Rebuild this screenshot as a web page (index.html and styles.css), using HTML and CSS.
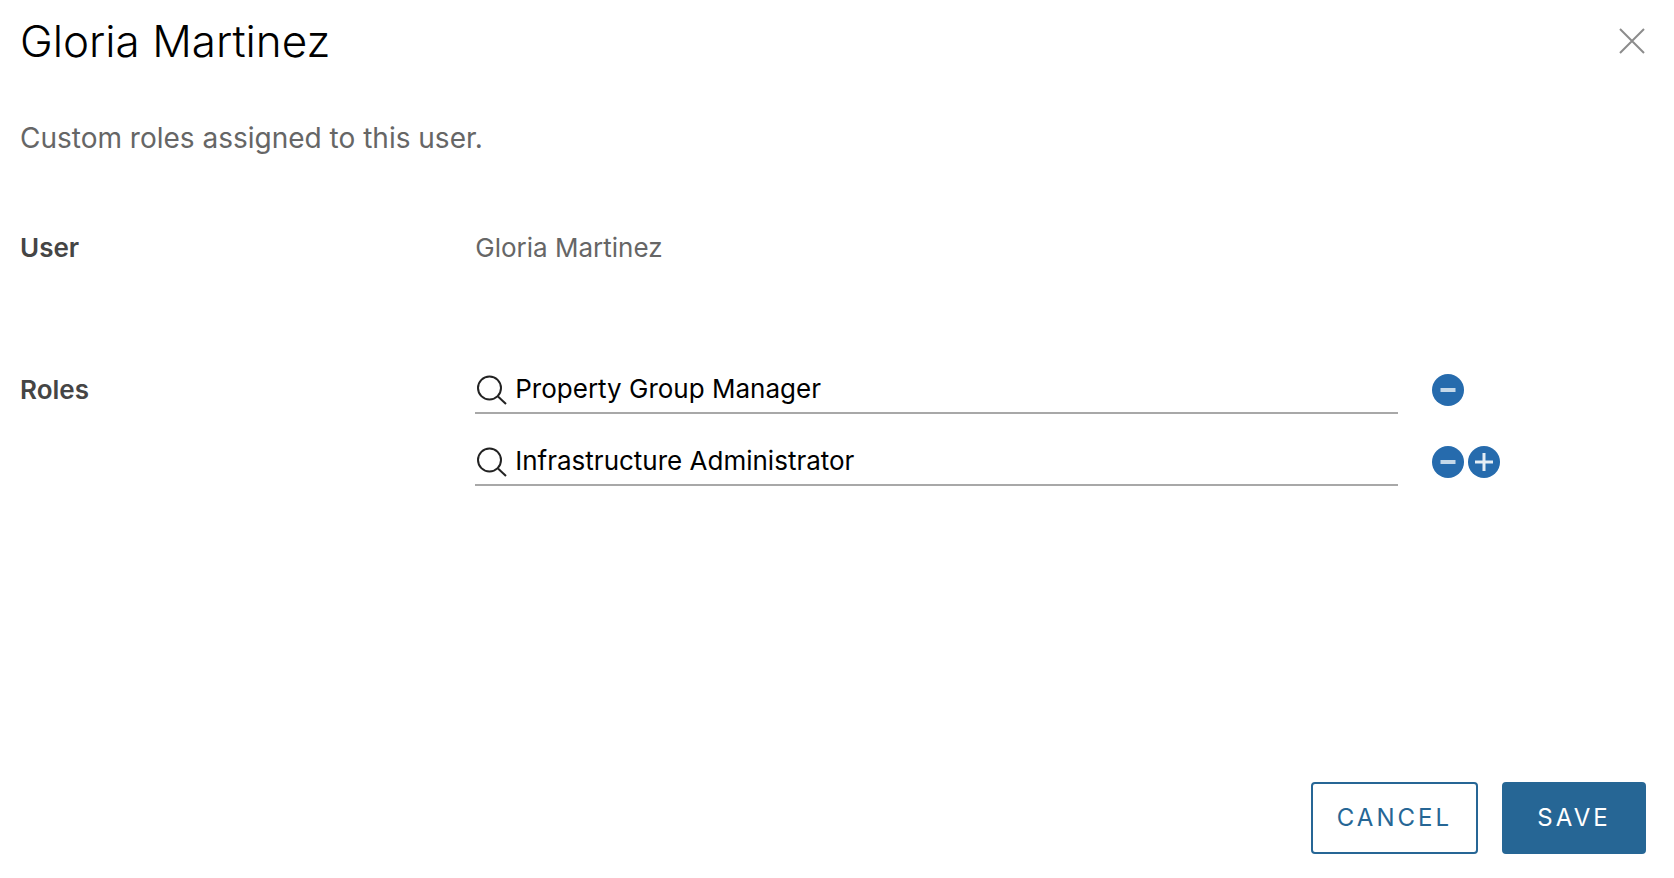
FILE: index.html
```html
<!DOCTYPE html>
<html lang="en">
<head>
<meta charset="utf-8">
<title>Gloria Martinez</title>
<link rel="stylesheet" href="styles.css">
</head>
<body>
<main class="dialog" role="dialog" aria-labelledby="dialog-title">
  <header class="dialog-header">
    <h1 class="dialog-title" id="dialog-title">Gloria Martinez</h1>
    <button class="icon-button" type="button" aria-label="Close">
      <svg class="close-icon" viewBox="0 0 28 28" aria-hidden="true"><path d="M2 2 26 26M26 2 2 26"/></svg>
    </button>
  </header>
  <p class="intro">Custom roles assigned to this user.</p>
  <form class="form" id="roles-form">
    <div class="form-row">
      <div class="label">User</div>
      <div class="value">Gloria Martinez</div>
    </div>
    <div class="form-row">
      <div class="label label-field" id="roles-label">Roles</div>
      <div class="roles" role="group" aria-labelledby="roles-label">
        <div class="role">
          <label class="search">
            <svg class="search-icon" viewBox="0 0 32 32" aria-hidden="true"><circle cx="14.5" cy="15" r="11.5"/><path d="M23 23.5 31 31"/></svg>
            <input class="search-input" type="text" aria-label="Role 1" value="Property Group Manager">
          </label>
          <div class="role-actions">
            <button class="icon-button" type="button" aria-label="Remove role">
              <svg class="round-icon" viewBox="0 0 32 32" aria-hidden="true"><circle cx="16" cy="16" r="16"/><path d="M8.5 16H23.5"/></svg>
            </button>
          </div>
        </div>
        <div class="role">
          <label class="search">
            <svg class="search-icon" viewBox="0 0 32 32" aria-hidden="true"><circle cx="14.5" cy="15" r="11.5"/><path d="M23 23.5 31 31"/></svg>
            <input class="search-input" type="text" aria-label="Role 2" value="Infrastructure Administrator">
          </label>
          <div class="role-actions">
            <button class="icon-button" type="button" aria-label="Remove role">
              <svg class="round-icon" viewBox="0 0 32 32" aria-hidden="true"><circle cx="16" cy="16" r="16"/><path d="M8.5 16H23.5"/></svg>
            </button>
            <button class="icon-button" type="button" aria-label="Add role">
              <svg class="round-icon round-icon-add" viewBox="0 0 32 32" aria-hidden="true"><circle cx="16" cy="16" r="16"/><path d="M7 16H25M16 7V25"/></svg>
            </button>
          </div>
        </div>
      </div>
    </div>
  </form>
  <footer class="dialog-footer">
    <button class="button" type="button">CANCEL</button>
    <button class="button button-primary" type="submit" form="roles-form">SAVE</button>
  </footer>
</main>
</body>
</html>
```
FILE: styles.css
```css
* {
  box-sizing: border-box;
}

body {
  margin: 0;
  background: #fff;
  color: #666;
  font-family: Inter, "Open Sans", sans-serif;
  font-size: 26px;
  line-height: 32px;
}

.dialog {
  display: flex;
  flex-direction: column;
  min-height: 100vh;
  padding: 15px 28px 24px 20px;
}

.dialog-header {
  display: flex;
  align-items: center;
  justify-content: space-between;
}

.dialog-title {
  margin: 0;
  color: #000;
  font-size: 44px;
  font-weight: 300;
  line-height: 52px;
}

.icon-button {
  display: flex;
  padding: 0;
  border: 0;
  background: none;
  cursor: pointer;
}

.close-icon {
  width: 28px;
  height: 28px;
  fill: none;
  stroke: #8c8c8c;
  stroke-width: 2;
}

.intro {
  margin: 53px 0 76px;
  font-size: 28px;
  line-height: 36px;
}

.form {
  display: flex;
  flex-direction: column;
  gap: 102px;
  flex: 1;
}

.form-row {
  display: grid;
  grid-template-columns: 28fr 72fr;
}

.label {
  color: #454545;
  font-weight: 600;
}

.label-field {
  padding-top: 8px;
}

.roles {
  display: flex;
  flex-direction: column;
  gap: 24px;
}

.role {
  display: grid;
  grid-template-columns: 69fr 16fr;
  gap: 34px;
}

.search {
  display: flex;
  align-items: center;
  gap: 8px;
  height: 48px;
  border-bottom: 2px solid #a8a8a8;
}

.search-icon {
  width: 32px;
  height: 32px;
  fill: none;
  stroke: #222;
  stroke-width: 2;
}

.search-input {
  flex: 1;
  min-width: 0;
  padding: 0;
  border: 0;
  outline: 0;
  background: none;
  color: #000;
  font: inherit;
}

.role-actions {
  display: flex;
  align-items: center;
  gap: 4px;
}

.round-icon {
  width: 32px;
  height: 32px;
  fill: #266bad;
}

.round-icon path {
  stroke: #c4d8e9;
  stroke-width: 4;
}

.round-icon-add path {
  stroke-width: 3;
  stroke: #e4edf5;
}

.dialog-footer {
  display: flex;
  justify-content: flex-end;
  gap: 24px;
}

.button {
  min-width: 144px;
  height: 72px;
  padding: 0 24px;
  border: 2px solid #266695;
  border-radius: 4px;
  background: #fff;
  color: #266695;
  font: inherit;
  font-size: 24px;
  letter-spacing: 3px;
  cursor: pointer;
}

.button-primary {
  background: #266695;
  color: #fff;
}
```
